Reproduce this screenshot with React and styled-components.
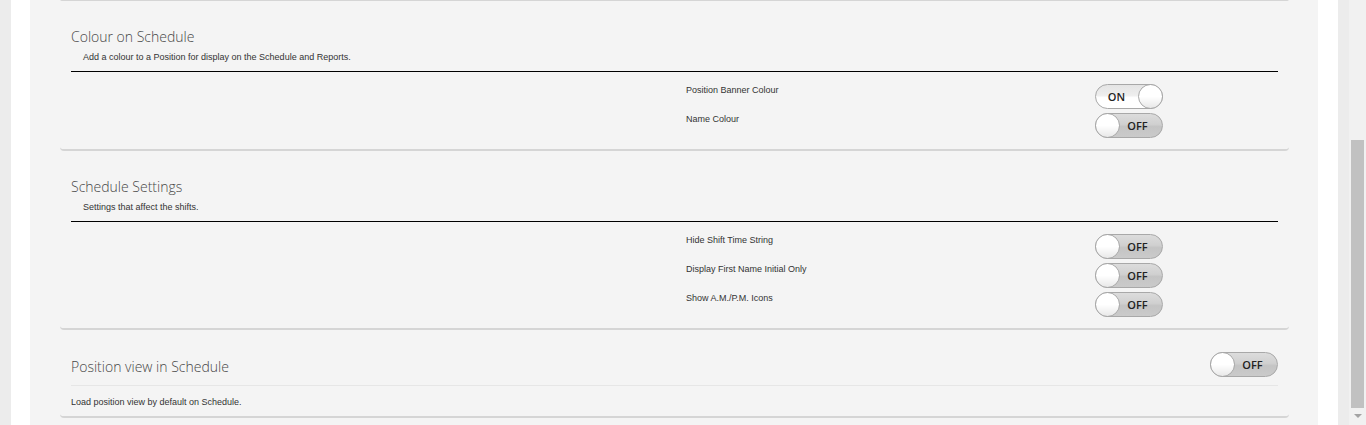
import styled, { createGlobalStyle } from "styled-components";

const GlobalStyle = createGlobalStyle`
  html, body {
    margin: 0;
    height: 100%;
    background: #ececec;
    overflow: hidden;
  }
  body {
    font-family: "Liberation Sans", Arial, sans-serif;
  }
`;

const Page = styled.div`
  display: flex;
  height: 425px;
`;

const Main = styled.div`
  flex: 1;
  display: flex;
  padding: 0 11px;
`;

const Card = styled.div`
  flex: 1;
  display: flex;
  background: #fff;
  padding: 0 20px 0 19px;
`;

const Panel = styled.div`
  flex: 1;
  background: #f4f4f4;
  padding: 0 29px 0 30px;
  overflow: hidden;
`;

const PrevEnd = styled.div`
  height: 0;
  margin-top: -1px;
  border-bottom: 2px solid #d5d5d5;
  border-radius: 0 0 4px 4px;
`;

const Section = styled.section`
  margin-top: 12px;
  padding: ${(p) => p.$top}px 11px ${(p) => p.$bottom}px;
  border-bottom: 2px solid #d5d5d5;
  border-radius: 0 0 4px 4px;
`;

const Header = styled.div`
  padding-bottom: 8px;
  border-bottom: 1px solid #000;
`;

const Title = styled.h3`
  margin: 0;
  padding-top: 1px;
  font-family: "Open Sans", sans-serif;
  font-weight: 300;
  font-size: 14px;
  line-height: 20px;
  color: #474747;
`;

const Subtitle = styled.p`
  margin: 4px 0 0 12px;
  font-size: 9px;
  line-height: 12px;
  color: #333;
`;

const Rows = styled.div`
  margin-top: 12px;
  display: flex;
  flex-direction: column;
  gap: 4px;
`;

const SettingRow = styled.div`
  display: grid;
  grid-template-columns: 1fr 409px 183px;
  align-items: start;
`;

const Label = styled.span`
  grid-column: 2;
  padding-top: 1px;
  font-size: 9px;
  line-height: 11px;
  color: #333;
`;

const Switch = styled.div`
  box-sizing: border-box;
  width: 68px;
  height: 25px;
  border: 1px solid #a8a8a8;
  border-radius: 13px;
  display: flex;
  align-items: center;
  flex-direction: ${(p) => (p.$on ? "row" : "row-reverse")};
  background: ${(p) =>
    p.$on
      ? "linear-gradient(#e4e4e4, #eeeeee 45%, #ffffff 55%, #ffffff)"
      : "linear-gradient(#dcdcdc, #d0d0d0 45%, #c4c4c4 55%, #cacaca)"};
  cursor: pointer;
`;

const Knob = styled.span`
  box-sizing: border-box;
  width: 25px;
  height: 25px;
  margin: -1px;
  border-radius: 50%;
  border: 1px solid #a8a8a8;
  background: linear-gradient(#ffffff, #ffffff 50%, #e8e8e8);
  flex-shrink: 0;
`;

const SwitchText = styled.span`
  flex: 1;
  text-align: center;
  padding: ${(p) => (p.$on ? "0 2px 0 0" : "0 6px 0 0")};
  font-family: "Open Sans", sans-serif;
  font-weight: 600;
  font-size: 11px;
  color: #222;
`;

const ViewHeader = styled.div`
  display: flex;
  justify-content: space-between;
  align-items: flex-end;
  padding-bottom: 8px;
  border-bottom: 1px solid #e6e6e6;
`;

const Note = styled.p`
  margin: 10px 0 0;
  font-size: 9px;
  line-height: 12px;
  color: #333;
`;

const ScrollBar = styled.div`
  width: 17px;
  background: #f1f1f1;
  display: flex;
  flex-direction: column;
  align-items: center;
`;

const Thumb = styled.div`
  width: 13px;
  height: 268px;
  margin-top: 140px;
  background: #c1c1c1;
`;

const ArrowDown = styled.div`
  margin-top: 6px;
  width: 0;
  height: 0;
  border-left: 4px solid transparent;
  border-right: 4px solid transparent;
  border-top: 4px solid #a3a3a3;
`;

const Toggle = ({ on }) => (
  <Switch $on={on}>
    <SwitchText $on={on}>{on ? "ON" : "OFF"}</SwitchText>
    <Knob />
  </Switch>
);

const Setting = ({ label, on }) => (
  <SettingRow>
    <Label>{label}</Label>
    <Toggle on={on} />
  </SettingRow>
);

const App = () => {
  return (
    <>
      <GlobalStyle />
      <Page>
        <Main>
          <Card>
            <Panel>
              <PrevEnd />

              <Section $top={13} $bottom={11}>
                <Header>
                  <Title>Colour on Schedule</Title>
                  <Subtitle>Add a colour to a Position for display on the Schedule and Reports.</Subtitle>
                </Header>
                <Rows>
                  <Setting label="Position Banner Colour" on />
                  <Setting label="Name Colour" on={false} />
                </Rows>
              </Section>

              <Section $top={13} $bottom={11}>
                <Header>
                  <Title>Schedule Settings</Title>
                  <Subtitle>Settings that affect the shifts.</Subtitle>
                </Header>
                <Rows>
                  <Setting label="Hide Shift Time String" on={false} />
                  <Setting label="Display First Name Initial Only" on={false} />
                  <Setting label="Show A.M./P.M. Icons" on={false} />
                </Rows>
              </Section>

              <Section $top={10} $bottom={8}>
                <ViewHeader>
                  <Title>Position view in Schedule</Title>
                  <Toggle on={false} />
                </ViewHeader>
                <Note>Load position view by default on Schedule.</Note>
              </Section>
            </Panel>
          </Card>
        </Main>
        <ScrollBar>
          <Thumb />
          <ArrowDown />
        </ScrollBar>
      </Page>
    </>
  );
};

export default App;
